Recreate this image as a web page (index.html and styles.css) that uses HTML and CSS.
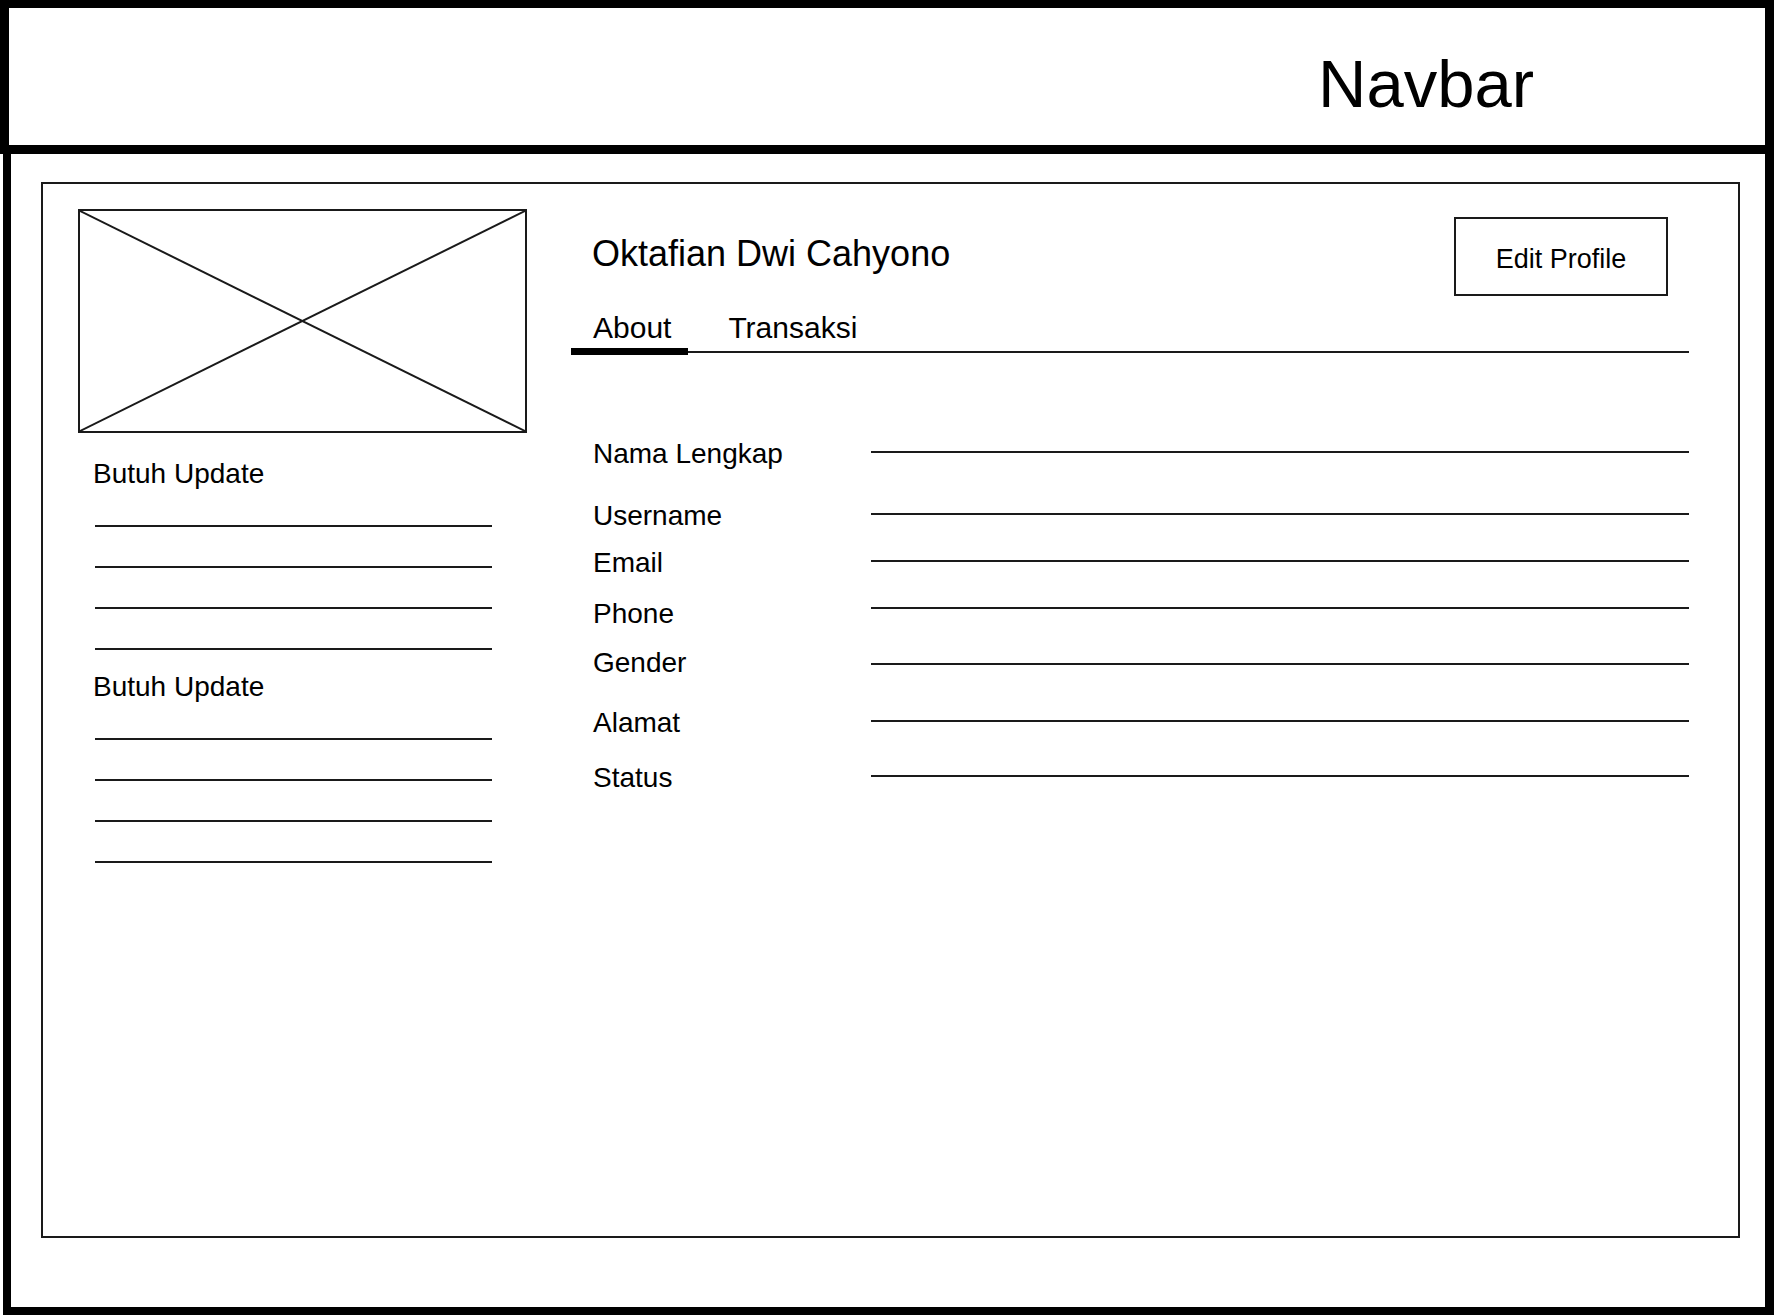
FILE: index.html
```html
<!DOCTYPE html>
<html lang="id">
<head>
    <meta charset="UTF-8">
    <meta name="viewport" content="width=device-width, initial-scale=1.0">
    <title>Profile</title>
    <link rel="stylesheet" href="styles.css">
</head>
<body>
    <div class="page">
        <header class="navbar">
            <div class="navbar-title">Navbar</div>
        </header>

        <div class="main">
            <div class="profile-frame">
                <!-- left side: photo + update lists -->
                <div class="side-column">
                    <div class="photo-box">
                        <svg class="photo-x" viewBox="0 0 100 100" preserveAspectRatio="none">
                            <line x1="0" y1="0" x2="100" y2="100"/>
                            <line x1="100" y1="0" x2="0" y2="100"/>
                        </svg>
                    </div>

                    <div class="update-block">
                        <div class="update-title">Butuh Update</div>
                        <div class="update-line"></div>
                        <div class="update-line"></div>
                        <div class="update-line"></div>
                        <div class="update-line"></div>
                    </div>

                    <div class="update-block">
                        <div class="update-title">Butuh Update</div>
                        <div class="update-line"></div>
                        <div class="update-line"></div>
                        <div class="update-line"></div>
                        <div class="update-line"></div>
                    </div>
                </div>

                <!-- right side: name, tabs, about data -->
                <div class="content-column">
                    <div class="profile-header">
                        <div class="profile-name">Oktafian Dwi Cahyono</div>
                        <button class="btn-edit">Edit Profile</button>
                    </div>

                    <div class="tab-list">
                        <div class="tab active">About</div>
                        <div class="tab">Transaksi</div>
                    </div>

                    <div class="info-list">
                        <div class="info-label">Nama Lengkap</div>
                        <div class="info-line"></div>
                        <div class="info-label">Username</div>
                        <div class="info-line"></div>
                        <div class="info-label">Email</div>
                        <div class="info-line"></div>
                        <div class="info-label">Phone</div>
                        <div class="info-line"></div>
                        <div class="info-label">Gender</div>
                        <div class="info-line"></div>
                        <div class="info-label">Alamat</div>
                        <div class="info-line"></div>
                        <div class="info-label">Status</div>
                        <div class="info-line"></div>
                    </div>
                </div>
            </div>
        </div>
    </div>
</body>
</html>
```

FILE: styles.css
```css
* {
    box-sizing: border-box;
}
body {
    margin: 0;
    font-family: "Liberation Sans", Arial, sans-serif;
    color: #000;
    background: #fff;
}
.page {
    width: 1774px;
    height: 1315px;
}

/* Top bar */
.navbar {
    height: 154px;
    border: 9px solid #000;
    border-top-width: 8px;
    display: flex;
    justify-content: flex-end;
    padding-top: 38px;
    padding-right: 231px;
}
.navbar-title {
    font-size: 67px;
    line-height: 75px;
}

/* Body area under the navbar */
.main {
    height: 1161px;
    margin-left: 3px;
    border: 8px solid #000;
    border-top: 0;
    border-right-width: 9px;
    padding: 28px 25px 0 30px;
}
.profile-frame {
    height: 1056px;
    border: 2px solid #1a1a1a;
    padding: 25px 49px 0 35px;
    display: flex;
    gap: 45px;
}

/* Left column */
.side-column {
    width: 448px;
    flex-shrink: 0;
}
.photo-box {
    width: 449px;
    height: 224px;
    border: 2px solid #1a1a1a;
}
.photo-x {
    display: block;
    width: 100%;
    height: 100%;
}
.photo-x line {
    stroke: #1a1a1a;
    stroke-width: 2;
    vector-effect: non-scaling-stroke;
}
.update-block {
    margin-top: 25px;
}
.update-block + .update-block {
    margin-top: 21px;
}
.update-title {
    font-size: 28px;
    line-height: 32px;
    padding-left: 15px;
}
.update-line {
    width: 397px;
    height: 2px;
    margin-left: 17px;
    margin-top: 39px;
    background: #1a1a1a;
}
.update-title + .update-line {
    margin-top: 35px;
}

/* Right column */
.content-column {
    flex: 1;
    padding-top: 8px;
}
.profile-header {
    display: flex;
    justify-content: space-between;
    align-items: center;
    padding: 0 21px;
}
.profile-name {
    font-size: 36px;
    line-height: 42px;
    margin-bottom: 5px;
}
.btn-edit {
    width: 214px;
    height: 79px;
    border: 2px solid #1a1a1a;
    background: #fff;
    padding: 6px 0 0;
    font-family: inherit;
    font-size: 27px;
    line-height: 31px;
    color: #000;
    display: flex;
    align-items: center;
    justify-content: center;
}

.tab-list {
    display: flex;
    align-items: flex-end;
    gap: 18px;
    margin-top: 15px;
    border-bottom: 2px solid #1a1a1a;
}
.tab {
    font-size: 30px;
    line-height: 34px;
    padding: 0 17px 3px 22px;
    border-bottom: 7px solid transparent;
    margin-bottom: -4px;
}
.tab.active {
    border-bottom-color: #000;
}

.info-list {
    display: grid;
    grid-template-columns: 278px 1fr;
    grid-template-rows: 62px 47px 51px 49px 60px 55px 32px;
    margin-top: 85px;
    margin-left: 22px;
}
.info-label {
    font-size: 28px;
    line-height: 32px;
}
.info-line {
    align-self: start;
    height: 2px;
    margin-top: 13px;
    background: #1a1a1a;
}
/* the phone and gender lines sit a bit off in the mockup */
.info-line:nth-child(8) {
    margin-top: 9px;
}
.info-line:nth-child(10) {
    margin-top: 16px;
}
```
